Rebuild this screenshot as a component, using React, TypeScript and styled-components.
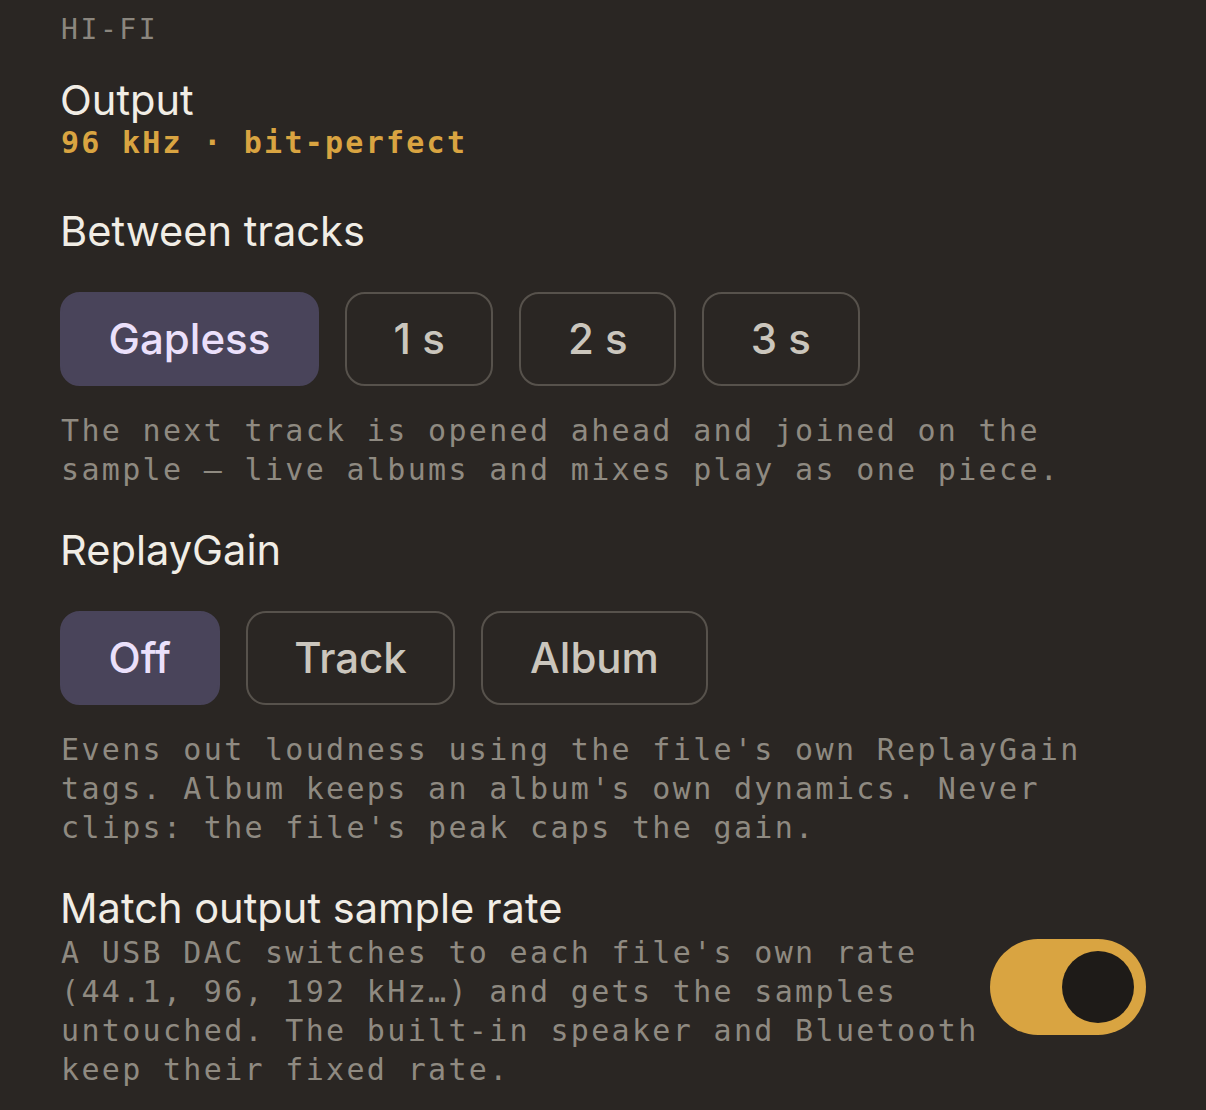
import { useState } from 'react';
import styled, { createGlobalStyle } from 'styled-components';

const GlobalStyle = createGlobalStyle`
  html, body {
    margin: 0;
    padding: 0;
    background: #2a2623;
  }
  * {
    box-sizing: border-box;
  }
`;

const mono = `"DejaVu Sans Mono", "Liberation Mono", monospace`;
const sans = `Inter, "Noto Sans", sans-serif`;

type Option = { id: string; label: string };

const gapOptions: Option[] = [
  { id: 'gapless', label: 'Gapless' },
  { id: '1', label: '1 s' },
  { id: '2', label: '2 s' },
  { id: '3', label: '3 s' },
];

const gainOptions: Option[] = [
  { id: 'off', label: 'Off' },
  { id: 'track', label: 'Track' },
  { id: 'album', label: 'Album' },
];

const Segmented = ({
  options,
  value,
  onChange,
}: {
  options: Option[];
  value: string;
  onChange: (id: string) => void;
}) => (
  <St.ChipRow>
    {options.map((o) => (
      <St.Chip key={o.id} $active={o.id === value} onClick={() => onChange(o.id)}>
        {o.label}
      </St.Chip>
    ))}
  </St.ChipRow>
);

const App = () => {
  const [gap, setGap] = useState('gapless');
  const [gain, setGain] = useState('off');
  const [match, setMatch] = useState(true);

  return (
    <>
      <GlobalStyle />
      <St.Page>
        <St.Eyebrow>HI-FI</St.Eyebrow>

        <St.OutputBlock>
          <St.Heading>Output</St.Heading>
          <St.Status>96 kHz · bit-perfect</St.Status>
        </St.OutputBlock>

        <St.Section $top={45}>
          <St.Heading>Between tracks</St.Heading>
          <Segmented options={gapOptions} value={gap} onChange={setGap} />
          <St.Note>
            The next track is opened ahead and joined on the sample — live albums and mixes
            play as one piece.
          </St.Note>
        </St.Section>

        <St.Section $top={38}>
          <St.Heading>ReplayGain</St.Heading>
          <Segmented options={gainOptions} value={gain} onChange={setGain} />
          <St.Note>
            Evens out loudness using the file's own ReplayGain tags. Album keeps an album's own
            dynamics. Never clips: the file's peak caps the gain.
          </St.Note>
        </St.Section>

        <St.SwitchRow>
          <St.SwitchText>
            <St.Heading>Match output sample rate</St.Heading>
            <St.SwitchNote>
              A USB DAC switches to each file's own rate (44.1, 96, 192 kHz…) and gets the
              samples untouched. The built-in speaker and Bluetooth keep their fixed rate.
            </St.SwitchNote>
          </St.SwitchText>
          <St.Toggle $on={match} onClick={() => setMatch(!match)} aria-pressed={match}>
            <St.Knob $on={match} />
          </St.Toggle>
        </St.SwitchRow>
      </St.Page>
    </>
  );
};

export default App;

const St = {
  Page: styled.div`
    display: flex;
    flex-direction: column;
    width: 1206px;
    min-height: 1110px;
    padding: 13px 60px 0 60px;

    background: #2a2623;
  `,

  Eyebrow: styled.div`
    padding-left: 1px;

    font-family: ${mono};
    font-size: 28px;
    line-height: 34px;
    letter-spacing: 2.6px;
    color: #8b867e;
  `,

  OutputBlock: styled.div`
    display: flex;
    flex-direction: column;
    margin-top: 30px;
  `,

  Heading: styled.h2`
    margin: 0;

    font-family: ${sans};
    font-size: 41.6px;
    font-weight: 400;
    line-height: 46px;
    color: #f1ede5;
  `,

  Status: styled.div`
    padding-left: 1px;

    font-family: ${mono};
    font-size: 30px;
    font-weight: 700;
    line-height: 40px;
    letter-spacing: 2.25px;
    color: #d9a441;
  `,

  Section: styled.section<{ $top: number }>`
    display: flex;
    flex-direction: column;
    margin-top: ${({ $top }) => $top}px;
  `,

  ChipRow: styled.div`
    display: flex;
    gap: 26px;
    margin-top: 38px;
  `,

  Chip: styled.button<{ $active: boolean }>`
    display: flex;
    justify-content: center;
    align-items: center;
    height: 94px;
    padding: 0 46.6px;

    border: 2px solid ${({ $active }) => ($active ? '#49445a' : '#57524c')};
    border-radius: 20px;
    background-color: ${({ $active }) => ($active ? '#49445a' : 'transparent')};
    color: ${({ $active }) => ($active ? '#ebe0fb' : '#cbc6bd')};

    font-family: ${sans};
    font-size: 42px;
    font-weight: 500;
    line-height: 48px;
    cursor: pointer;
  `,

  Note: styled.p`
    margin: 25px 0 0;
    padding-left: 1px;

    font-family: ${mono};
    font-size: 30px;
    line-height: 39px;
    letter-spacing: 2.33px;
    color: #8f8a81;
  `,

  SwitchRow: styled.div`
    display: flex;
    align-items: center;
    gap: 8px;
    margin-top: 38px;
  `,

  SwitchText: styled.div`
    flex: 1;
    display: flex;
    flex-direction: column;
  `,

  SwitchNote: styled.p`
    margin: 2px 0 0;
    padding-left: 1px;

    font-family: ${mono};
    font-size: 30px;
    line-height: 39px;
    letter-spacing: 2.33px;
    color: #8f8a81;
  `,

  Toggle: styled.button<{ $on: boolean }>`
    display: flex;
    align-items: center;
    justify-content: ${({ $on }) => ($on ? 'flex-end' : 'flex-start')};
    flex-shrink: 0;
    width: 156px;
    height: 96px;
    padding: 0 12px;

    border: none;
    border-radius: 48px;
    background-color: ${({ $on }) => ($on ? '#d9a441' : '#57524c')};
    cursor: pointer;
  `,

  Knob: styled.span<{ $on: boolean }>`
    width: 72px;
    height: 72px;

    border-radius: 50%;
    background-color: ${({ $on }) => ($on ? '#1e1b18' : '#cbc6bd')};
  `,
};
